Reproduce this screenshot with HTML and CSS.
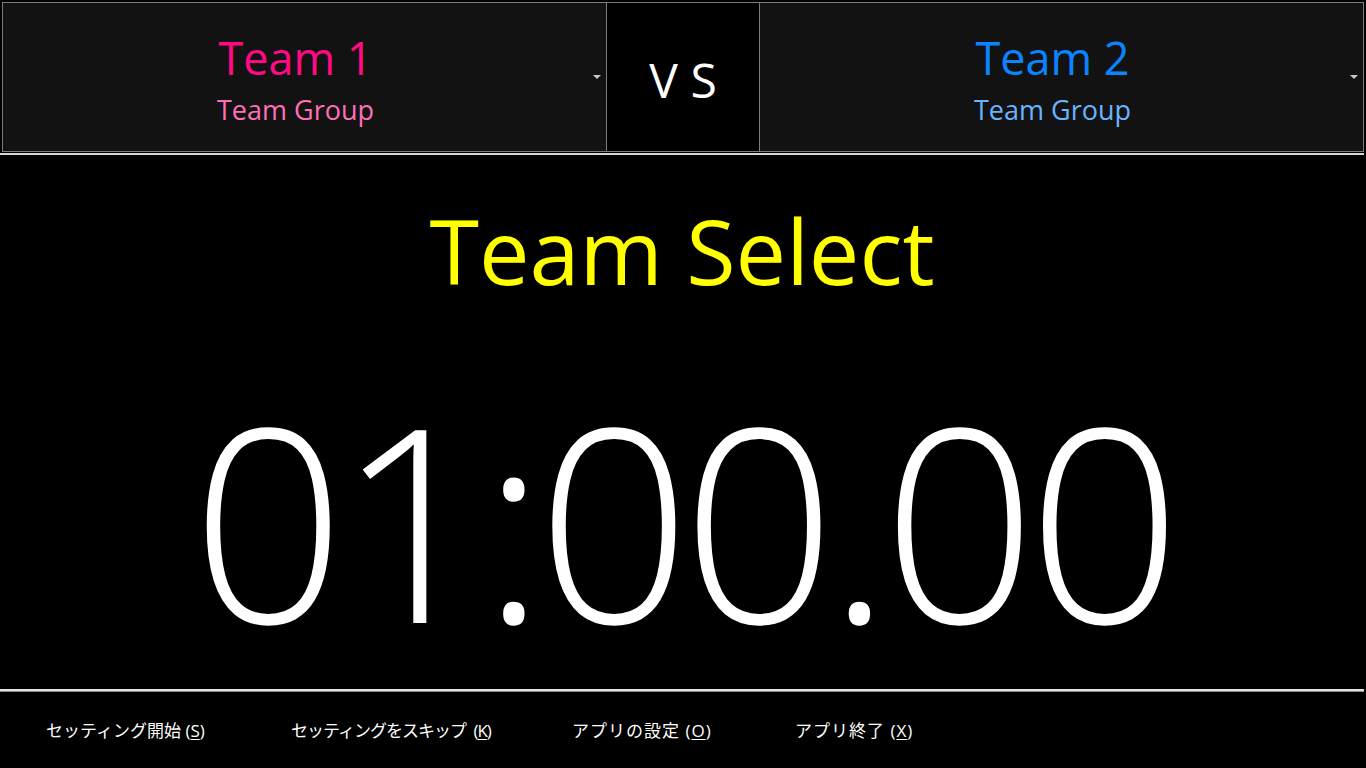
FILE: index.html
```html
<!DOCTYPE html>
<html lang="ja">
<head>
<meta charset="utf-8">
<title>Team Select</title>
<link rel="stylesheet" href="styles.css">
</head>
<body>
<div class="app">
  <header class="teams">
    <div class="team team-1">
      <div class="team-text">
        <div class="team-name">Team 1</div>
        <div class="team-group">Team Group</div>
      </div>
      <div class="caret-col"><span class="caret"></span></div>
    </div>
    <div class="vs">V S</div>
    <div class="team team-2">
      <div class="team-text">
        <div class="team-name">Team 2</div>
        <div class="team-group">Team Group</div>
      </div>
      <div class="caret-col"><span class="caret"></span></div>
    </div>
  </header>
  <main class="board">
    <div class="phase">Team Select</div>
    <div class="timer">01:00.00</div>
  </main>
  <footer class="actions">
    <button class="action">セッティング開始 (<u>S</u>)</button>
    <button class="action action-tight">セッティングをスキップ (<u>K</u>)</button>
    <button class="action action-wide">アプリの設定 (<u>O</u>)</button>
    <button class="action action-wide">アプリ終了 (<u>X</u>)</button>
  </footer>
</div>
</body>
</html>
```

FILE: styles.css
```css
html, body {
  margin: 0;
  padding: 0;
  background: #000;
  height: 100%;
  overflow: hidden;
}

.app {
  width: 1366px;
  height: 768px;
  display: flex;
  flex-direction: column;
  font-family: "Segoe UI", "Open Sans", "Noto Sans CJK JP", sans-serif;
  color: #fff;
}

.teams {
  display: flex;
  height: 150px;
  padding: 2px 2px 0 2px;
}

.team {
  display: flex;
  background: #121212;
  border: 1px solid #7c7c7c;
}

.team-1 { width: 605px; box-sizing: border-box; }
.team-2 { width: 605px; box-sizing: border-box; }

.team-text {
  flex: 1;
  display: flex;
  flex-direction: column;
  align-items: center;
  justify-content: center;
  gap: 16px;
  padding-top: 4px;
}

.team-name {
  font-size: 45px;
  line-height: 1;
}

.team-group {
  font-size: 27px;
  line-height: 1;
}

.team-1 .team-name { color: #ff0a84; }
.team-1 .team-group { color: #ff6fb5; }
.team-2 .team-name { color: #0a84ff; }
.team-2 .team-group { color: #6ab4ff; }

.caret-col {
  width: 18px;
  display: flex;
  align-items: center;
  justify-content: center;
}

.caret {
  width: 0;
  height: 0;
  border-left: 4px solid transparent;
  border-right: 4px solid transparent;
  border-top: 4px solid #c8c8c8;
}

.vs {
  width: 152px;
  display: flex;
  align-items: center;
  justify-content: center;
  font-size: 48px;
  line-height: 1;
  background: #000;
  border-top: 1px solid #7c7c7c;
  border-bottom: 1px solid #7c7c7c;
  padding-top: 6px;
  box-sizing: border-box;
}

.board {
  margin-top: 1px;
  border-top: 2px solid #d6d6d6;
  border-bottom: 2px solid #e2e2e2;
  width: 1364px;
  height: 534px;
  display: flex;
  flex-direction: column;
  align-items: center;
}

.phase {
  margin-top: 50px;
  font-size: 90px;
  line-height: 1;
  color: #ffff00;
}

.timer {
  margin-top: 88px;
  font-size: 270px;
  line-height: 1;
  font-weight: 350;
  letter-spacing: -9px;
}

.actions {
  border-top: 1px solid #8a8a8a;
  width: 1364px;
  flex: 1;
  display: grid;
  grid-template-columns: 245px 281px 223px auto;
  align-items: center;
  padding-left: 46px;
  padding-bottom: 2px;
  box-sizing: border-box;
}

.action {
  justify-self: start;
  background: none;
  border: none;
  padding: 0;
  color: #fff;
  font-family: "Segoe UI", "Open Sans", "Noto Sans CJK JP", sans-serif;
  font-size: 17px;
  cursor: pointer;
}

.action-tight {
  letter-spacing: -1px;
  word-spacing: 4px;
}

.action-wide {
  letter-spacing: 1px;
}

.action u {
  text-underline-offset: 2px;
}
```
